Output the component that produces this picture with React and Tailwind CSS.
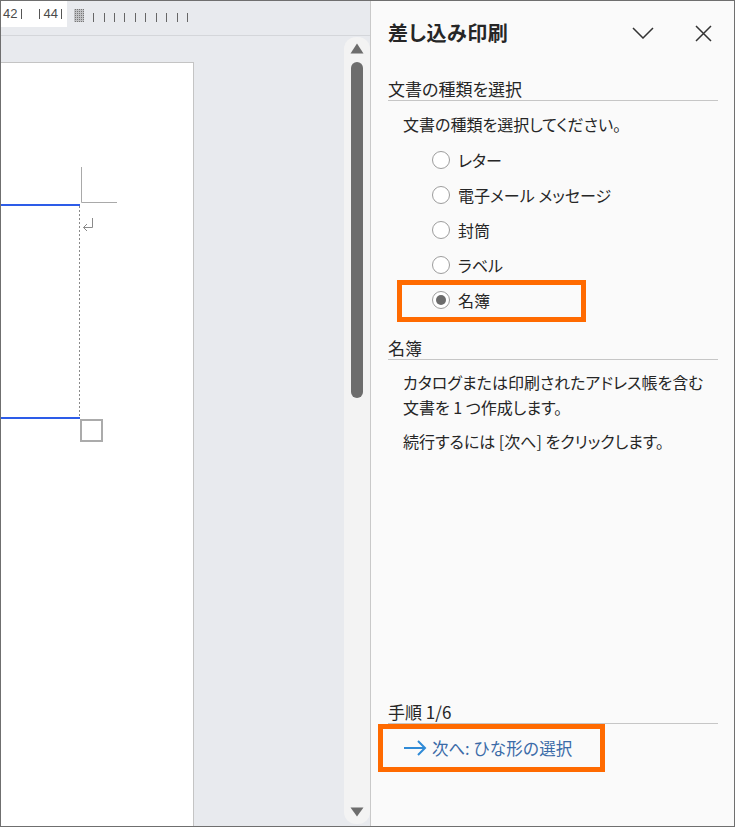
import React from 'react';

const jp = { fontFamily: '"Noto Sans CJK JP", "Noto Sans", sans-serif' };

const Radio = ({ label, checked }) => (
  <div className="flex items-center h-[35px] pl-[44px]">
    <span className="w-[18px] h-[18px] rounded-full border border-[#9d9d9d] bg-white flex items-center justify-center">
      {checked && <span className="w-[10px] h-[10px] rounded-full bg-[#6b6b6b]" />}
    </span>
    <span className="ml-[8px] text-[16px] leading-[22px]">{label}</span>
  </div>
);

const Ruler = () => {
  const ticks = [93, 104, 114, 124, 135, 145, 156, 166, 177, 187];
  return (
    <div className="h-[35px] border-b border-[#d4d6da] bg-[#e8eaee] flex items-start">
      <div className="w-[66px] h-[26px] bg-white flex items-center text-[13px] text-[#4a4a4a] font-['Liberation_Sans',sans-serif]">
        <span className="ml-[2px]">42</span>
        <span className="ml-[4px] w-px h-[10px] bg-[#555]" />
        <span className="ml-[17px] w-px h-[10px] bg-[#555]" />
        <span className="ml-[3px]">44</span>
        <span className="ml-[3px] w-px h-[10px] bg-[#555]" />
      </div>
      <svg width="300" height="26" className="block">
        <defs>
          <pattern id="hatch" width="2" height="2" patternUnits="userSpaceOnUse">
            <rect width="1" height="1" fill="#777" />
          </pattern>
        </defs>
        <rect x="7" y="8" width="10" height="13" fill="url(#hatch)" />
        <rect x="7" y="8" width="10" height="13" fill="#777" opacity="0.35" />
        {ticks.map((t) => (
          <rect key={t} x={t - 67} y="12" width="1" height="9" fill="#666" />
        ))}
      </svg>
    </div>
  );
};

const PageMarks = () => (
  <svg width="192" height="400" className="block">
    <path d="M80.5 104 V139.5 H116" stroke="#a9a9a9" strokeWidth="1" fill="none" />
    <rect x="0" y="141" width="79" height="2" fill="#2d5ce8" />
    <path d="M78.5 143 V354" stroke="#8a8a8a" strokeWidth="1" strokeDasharray="2 2" fill="none" />
    <rect x="0" y="354" width="79" height="2" fill="#2d5ce8" />
    <path d="M91.5 155 V164.5 H82.5 M86 161 L82.5 164.5 L86 168" stroke="#8a8a8a" strokeWidth="1" fill="none" />
    <rect x="80" y="357" width="21" height="21" stroke="#ababab" strokeWidth="2" fill="white" />
  </svg>
);

const ScrollBar = () => (
  <div className="w-[26px] bg-[#e8eaee] pt-[1px] pb-[2px] flex">
    <div className="flex-1 bg-[#f3f3f3] rounded-[12px] flex flex-col items-center">
      <svg width="14" height="11" className="mt-[6px]">
        <path d="M7 0.5 L13.5 10.5 H0.5 Z" fill="#6d6d6d" />
      </svg>
      <div className="mt-[8px] w-[12px] h-[336px] rounded-full bg-[#6d6d6d]" />
      <div className="flex-1" />
      <svg width="14" height="10" className="mb-[7px]">
        <path d="M0.5 0.5 H13.5 L7 9.5 Z" fill="#6d6d6d" />
      </svg>
    </div>
  </div>
);

export default function App() {
  return (
    <div
      className="w-[735px] h-[827px] border border-[#6f6f6f] flex bg-white text-[#262626] [font-feature-settings:'palt']"
      style={jp}
    >
      {/* document side */}
      <div className="w-[370px] flex flex-col border-r border-[#c9c9c9]">
        <Ruler />
        <div className="flex-1 flex bg-[#e8eaee]">
          <div className="flex-1 pt-[26px]">
            <div className="w-[193px] h-full bg-white border-t border-r border-[#c4c4c4]">
              <PageMarks />
            </div>
          </div>
          <ScrollBar />
        </div>
      </div>

      {/* mail merge pane */}
      <div className="flex-1 bg-[#fafafa] flex flex-col pl-[17px] pr-[16px]">
        <div className="h-[64px] flex items-center">
          <h1 className="text-[20px] font-bold leading-none tracking-[0.5px]">差し込み印刷</h1>
          <div className="flex-1" />
          <svg width="22" height="12" className="mr-[41px]">
            <path d="M1 1 L11 11 L21 1" stroke="#333" strokeWidth="1.5" fill="none" />
          </svg>
          <svg width="17" height="17" className="mr-[6px]">
            <path d="M1 1 L16 16 M16 1 L1 16" stroke="#333" strokeWidth="1.5" fill="none" />
          </svg>
        </div>

        <div className="mt-[12px] text-[17px] leading-[23px] border-b border-[#c6c6c6]">文書の種類を選択</div>
        <p className="mt-[12px] pl-[15px] text-[16px] leading-[23px]">文書の種類を選択してください。</p>

        <div className="relative mt-[6px]">
          <Radio label="レター" />
          <Radio label="電子メール メッセージ" />
          <Radio label="封筒" />
          <Radio label="ラベル" />
          <Radio label="名簿" checked />
          <div className="absolute left-[9px] top-[138px] w-[189px] h-[42px] border-[5px] border-[#ff6a00]" />
        </div>

        <div className="mt-[19px] text-[17px] leading-[23px] border-b border-[#c6c6c6]">名簿</div>
        <div className="mt-[10px] pl-[15px] text-[16px] leading-[25px]">
          <p>カタログまたは印刷されたアドレス帳を含む</p>
          <p>文書を 1 つ作成します。</p>
          <p className="mt-[9px]">続行するには [次へ] をクリックします。</p>
        </div>

        <div className="flex-1" />

        <div className="text-[17px] leading-[23px] border-b border-[#c6c6c6]">手順 1/6</div>
        <div className="relative h-[48px] mb-[54px]">
          <div className="absolute -left-[10px] top-0 w-[227px] h-[48px] border-[5px] border-[#ff6a00]" />
          <div className="h-full flex items-center pl-[15px]">
            <svg width="24" height="16">
              <path d="M1 8 H22 M15 1 L22 8 L15 15" stroke="#2f8ad6" strokeWidth="2" fill="none" />
            </svg>
            <span className="ml-[5px] text-[16.5px] text-[#3b6ba8] [font-feature-settings:normal]">次へ: ひな形の選択</span>
          </div>
        </div>
      </div>
    </div>
  );
}
